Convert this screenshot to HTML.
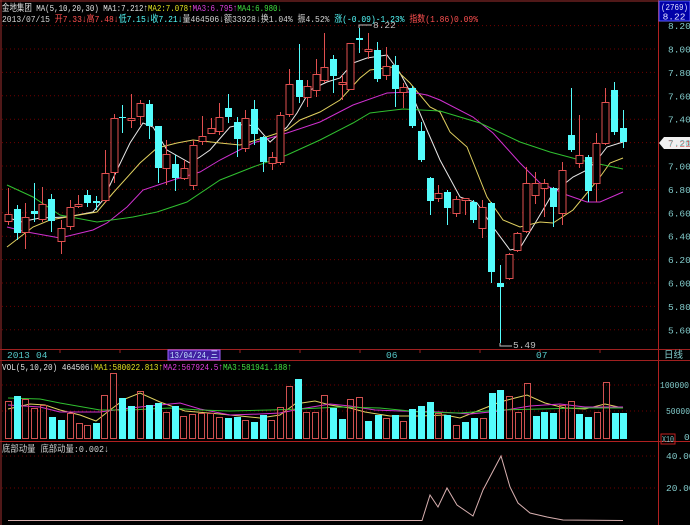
<!DOCTYPE html>
<html><head><meta charset="utf-8"><style>
html,body{margin:0;padding:0;background:#000;}
body{width:690px;height:525px;overflow:hidden;position:relative;font-family:"Liberation Mono","Noto Sans CJK SC",monospace;}
svg{position:absolute;left:0;top:0;}
text{font-family:"Liberation Mono","Noto Sans CJK SC",monospace;font-size:9.5px;}
</style></head><body>
<svg id="s" width="690" height="525" xmlns="http://www.w3.org/2000/svg">
<rect width="690" height="525" fill="#000"/>
<g id="grid"></g>
<g id="lines"></g>
<g id="c"></g>
<line x1="1" y1="0" x2="1" y2="525" stroke="#a03030"/>
<line x1="658.5" y1="0" x2="658.5" y2="525" stroke="#b02020"/>
<line x1="0" y1="1" x2="690" y2="1" stroke="#a03030"/>
<line x1="0" y1="349.5" x2="690" y2="349.5" stroke="#a02020"/>
<line x1="0" y1="360.5" x2="690" y2="360.5" stroke="#a02020"/>
<line x1="0" y1="441.5" x2="690" y2="441.5" stroke="#b02020"/>
<rect x="659" y="1" width="31" height="20" fill="#0000a8" stroke="#6060ff"/>
<text x="661" y="10" fill="#e0e0ff" textLength="27" lengthAdjust="spacingAndGlyphs">(2769)</text>
<text x="674" y="19.5" fill="#e0e0ff" text-anchor="middle">8.22</text>
<text x="2" y="11" fill="#e0e0e0" textLength="280" lengthAdjust="spacingAndGlyphs">金地集团 MA(5,10,20,30) MA1:7.212↑<tspan fill="#e0e020">MA2:7.078↑</tspan><tspan fill="#e040e0">MA3:6.795↑</tspan><tspan fill="#40e040">MA4:6.980↓</tspan></text>
<text x="2" y="22" fill="#d0d0d0" textLength="476" lengthAdjust="spacingAndGlyphs">2013/07/15 <tspan fill="#ff5050">开7.33↓高7.48↓</tspan><tspan fill="#54fcfc">低7.15↓收7.21↓</tspan>量464506↓额33928↓换1.04% 振4.52% <tspan fill="#54fcfc">涨(-0.09)-1.23%</tspan> <tspan fill="#ff5050">指数(1.86)0.09%</tspan></text>
<g id="axis" fill="#80c8c8"></g>
<text x="7" y="358" fill="#54c8c8">2013</text>
<text x="36" y="358" fill="#54c8c8">04</text>
<rect x="168" y="350" width="52" height="10" fill="#4020a0" stroke="#a060ff"/>
<text x="170" y="358" fill="#c0e0ff" textLength="48" lengthAdjust="spacingAndGlyphs">13/04/24,三</text>
<text x="386" y="358" fill="#54c8c8">06</text>
<text x="536" y="358" fill="#54c8c8">07</text>
<text x="664" y="358" fill="#80c8c8">日线</text>
<text x="2" y="370" fill="#e0e0e0" textLength="290" lengthAdjust="spacingAndGlyphs">VOL(5,10,20) 464506↓<tspan fill="#e0e020">MA1:580022.813↑</tspan><tspan fill="#e040e0">MA2:567924.5↑</tspan><tspan fill="#40e040">MA3:581941.188↑</tspan></text>
<text x="660" y="388" fill="#80c8c8" textLength="29" lengthAdjust="spacingAndGlyphs">100000</text>
<text x="666" y="414" fill="#80c8c8" textLength="24" lengthAdjust="spacingAndGlyphs">50000</text>
<text x="684" y="440" fill="#80c8c8">0</text>
<rect x="661" y="434" width="14" height="10" fill="none" stroke="#c02020"/>
<text x="662" y="442" fill="#80c8c8" textLength="12" lengthAdjust="spacingAndGlyphs">X10</text>
<text x="2" y="452" fill="#d0d0d0" textLength="107" lengthAdjust="spacingAndGlyphs">底部动量 底部动量:0.002↓</text>
<text x="666" y="459" fill="#80c8c8">40.00</text>
<text x="666" y="491" fill="#80c8c8">20.00</text>
<polyline fill="none" stroke="#d8b0b0" points="8,520.5 422,520.5 430,495 438,507 447,488 457,505 473,516 483,490 501,456 510,487 518,503 530,513 547,517 563,520 623,520.5"/>
</svg>
<script>
var NS="http://www.w3.org/2000/svg";
function el(p,n,a){var e=document.createElementNS(NS,n);for(var k in a)e.setAttribute(k,a[k]);p.appendChild(e);return e;}
var G=document.getElementById('grid'),L=document.getElementById('lines'),C=document.getElementById('c'),A=document.getElementById('axis');
for(var k=0;k<=13;k++){var p=8.2-k*0.2;var y=49+(8-p)*117;
 el(G,'line',{x1:2,y1:y,x2:658,y2:y,stroke:'#700000','stroke-dasharray':'1,3'});
 var t=el(A,'text',{x:668,y:y+3.5});t.textContent=p.toFixed(2);}
[385,411,456,488].forEach(function(y){el(G,'line',{x1:2,y1:y,x2:658,y2:y,stroke:'#700000','stroke-dasharray':'1,3'});});
[60,120,180,240,300,360,420,480,540,600].forEach(function(x){el(G,'line',{x1:x,y1:350,x2:x,y2:353,stroke:'#a02020'});});
var cd=[[8,188,225,214,221,1],[17,205,240,209,233,0],[25,203,249,217,232,1],[34,183,222,211,214,0],[42,187,222,204,219,1],[51,194,232,199,221,0],[61,220,254,228,241,1],[70,200,230,207,226,1],[78,195,208,204,206,1],[87,190,207,195,203,0],[96,196,210,201,203,0],[105,150,203,173,200,1],[114,114,183,118,172,1],[122,105,133,117,118,0],[131,94,128,118,120,1],[140,100,125,103,116,1],[149,100,139,104,126,0],[158,126,183,126,168,0],[166,140,185,154,168,1],[175,155,191,164,178,0],[184,160,180,168,178,1],[193,140,190,145,185,1],[202,116,145,136,141,1],[211,118,134,128,133,1],[219,103,135,117,131,1],[228,94,123,108,117,0],[237,117,157,122,139,0],[245,110,152,118,148,1],[254,100,145,109,134,0],[263,136,172,137,162,0],[272,152,170,157,163,1],[280,112,165,115,162,1],[289,69,117,84,114,1],[299,44,103,80,97,0],[307,80,107,86,97,1],[316,59,97,74,90,1],[324,33,83,67,80,1],[333,55,93,59,76,0],[342,75,100,82,84,1],[350,43,90,43,89,1],[359,28,53,38,40,0],[368,33,59,49,51,1],[377,42,82,50,79,0],[386,47,80,66,75,1],[395,56,107,65,89,0],[403,83,108,87,92,1],[412,86,128,88,126,0],[421,122,162,131,160,0],[430,177,215,178,201,0],[438,185,202,193,198,1],[447,190,225,192,208,0],[456,196,217,199,213,1],[465,198,215,198,200,1],[473,200,223,202,220,0],[482,200,238,207,228,1],[491,202,283,203,272,0],[500,265,343,283,287,0],[509,253,280,254,278,1],[517,232,252,233,250,1],[526,167,233,183,231,1],[535,172,204,183,195,1],[544,179,217,183,188,1],[553,187,227,188,207,0],[562,162,225,170,213,1],[571,88,152,135,150,0],[579,115,168,155,163,1],[588,155,202,157,191,0],[596,133,202,143,183,1],[605,88,145,102,143,1],[614,82,135,90,132,0],[623,110,148,128,142,0]];
cd.forEach(function(c){var col=c[5]?'#e05050':'#54fcfc';var x=c[0];
 el(C,'line',{x1:x+0.5,y1:c[1],x2:x+0.5,y2:c[3],stroke:col});
 el(C,'line',{x1:x+0.5,y1:c[4],x2:x+0.5,y2:c[2],stroke:col});
 var h=Math.max(1,c[4]-c[3]);
 if(c[5])el(C,'rect',{x:x-3,y:c[3]+0.5,width:7,height:h,fill:'#000',stroke:col});
 else el(C,'rect',{x:x-3,y:c[3],width:7,height:h,fill:col});});
function pl(pts,col){el(L,'polyline',{points:pts,fill:'none',stroke:col,'stroke-width':1});}
pl("7,217 20,222 40,218 67,217 93,212 103,200 117,170 130,143 143,123 153,127 167,150 190,163 200,157 210,150 230,127 245,124 257,127 270,142 287,127 297,113 310,90 327,82 340,78 353,63 367,58 387,55 400,73 413,97 427,130 440,160 460,197 477,203 493,227 510,250 520,248 537,220 553,193 573,177 587,170 597,160 607,147 623,142",'#e8e8e8');
pl("7,247 33,227 50,220 67,217 97,212 113,193 140,163 157,148 177,143 193,140 220,143 240,145 263,138 287,130 300,120 320,112 340,100 360,78 370,70 393,67 410,83 430,107 440,112 450,132 467,147 487,197 503,220 520,227 540,222 553,223 573,210 587,193 600,177 610,163 623,158",'#e0d060');
pl("7,227 27,232 60,238 93,230 107,223 127,207 143,190 173,180 200,172 220,160 253,143 287,133 320,122 353,105 387,93 410,92 427,95 440,100 473,117 493,133 520,163 540,183 567,195 587,202 600,202 623,192",'#d030d0');
pl("7,185 33,197 60,215 97,222 133,217 157,212 187,202 220,180 253,167 287,155 320,140 353,123 370,113 403,109 440,111 480,123 520,142 550,152 580,160 623,169",'#30c030');
pl("359,28 359,25 372,25",'#c0c0c0');var t=el(C,'text',{x:373,y:28,fill:'#c0c0c0'});t.textContent='8.22';
pl("500,343 500,346 512,346",'#c0c0c0');t=el(C,'text',{x:513,y:348,fill:'#c0c0c0'});t.textContent='5.49';
el(C,'path',{d:'M659,143 L664,137 L690,137 L690,149 L664,149 Z',fill:'#f0f0f0'});
t=el(C,'text',{x:668,y:146.5,fill:'#d02020'});t.textContent='7.21';
var vb=[[8,401,1],[17,396,0],[25,399,1],[34,408,1],[43,405,1],[52,417,0],[61,420,0],[70,413,1],[79,423,1],[87,425,1],[96,423,0],[104,395,1],[113,373,1],[122,398,0],[131,406,0],[140,391,1],[149,405,0],[158,403,0],[166,412,1],[175,406,0],[183,416,1],[192,414,1],[201,413,1],[210,413,1],[219,417,1],[228,418,0],[237,417,0],[245,420,1],[254,422,0],[263,415,0],[271,420,1],[280,407,1],[289,386,1],[298,379,0],[306,412,1],[315,412,1],[324,395,1],[333,408,0],[342,419,0],[350,399,1],[359,397,1],[368,421,0],[378,415,0],[386,418,1],[395,415,0],[403,421,1],[412,409,0],[421,406,0],[430,402,0],[438,413,1],[447,415,0],[456,425,1],[465,422,0],[474,418,0],[483,418,1],[492,393,0],[500,390,0],[509,396,1],[518,412,1],[527,383,1],[536,416,0],[544,412,0],[553,413,0],[562,405,1],[571,401,1],[579,414,0],[588,417,0],[597,412,1],[606,382,1],[615,413,0],[623,413,0]];
vb.forEach(function(v){if(v[2])el(C,'rect',{x:v[0]-3+0.5,y:v[1]+0.5,width:6,height:438-v[1],fill:'none',stroke:'#d05050'});else el(C,'rect',{x:v[0]-3,y:v[1],width:7,height:439-v[1],fill:'#54fcfc'});});
pl("8,409 30,404 45,405 60,410 80,415 96,421 110,410 125,399 140,393 160,402 185,411 220,414 260,418 280,415 295,404 315,401 330,405 350,408 365,412 390,416 420,416 445,415 460,418 480,410 500,402 515,398 527,395 545,403 565,408 585,409 605,404 623,408",'#e0d060');
pl("8,405 40,407 60,412 100,412 130,408 160,405 180,403 200,409 230,415 260,414 280,413 300,409 330,404 350,406 375,410 400,411 440,412 470,414 500,411 530,406 560,404 585,407 600,407 623,407",'#d030d0');
pl("8,398 40,399 60,403 100,410 130,410 170,408 200,410 230,411 270,410 300,409 340,407 380,408 420,412 460,413 500,410 540,409 580,408 623,408",'#30c030');
</script>
</body></html>
